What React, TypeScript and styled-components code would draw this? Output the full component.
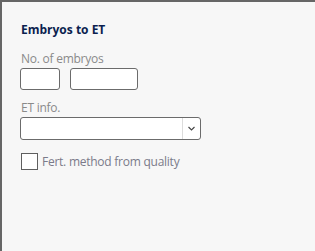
import React from 'react'
import styled, { createGlobalStyle } from 'styled-components'

const GlobalStyle = createGlobalStyle`
  html, body {
    margin: 0;
    padding: 0;
    background: #f7f7f7;
  }
  body {
    font-family: 'Open Sans', 'Noto Sans', sans-serif;
  }
`

const Panel = styled.div`
  box-sizing: border-box;
  width: 315px;
  height: 251px;
  background: #f7f7f7;
  border-top: 2px solid #666666;
  border-left: 2px solid #666666;
  padding: 20px 0 0 18px;
`

const Title = styled.h2`
  margin: 0 0 13px 1px;
  font-size: 12px;
  font-weight: 700;
  line-height: 16px;
  color: #0b1f4f;
`

const Field = styled.div`
  display: flex;
  flex-direction: column;
  margin-bottom: 10px;
`

const Label = styled.label`
  margin-left: 1px;
  font-size: 12px;
  letter-spacing: -0.25px;
  line-height: 16px;
  color: #8a8a8a;
  margin-bottom: 1px;
`

const Row = styled.div`
  display: flex;
  gap: 10px;
`

const TextBox = styled.input<{ $width: number }>`
  box-sizing: border-box;
  width: ${(p) => p.$width}px;
  height: 22px;
  border: 1px solid #6b6b6b;
  border-radius: 3px;
  background: #ffffff;
  padding: 0 4px;
  font: inherit;
  outline: none;
`

const SelectBox = styled.div`
  box-sizing: border-box;
  display: flex;
  width: 181px;
  height: 23px;
  border: 1px solid #6b6b6b;
  border-radius: 3px;
  background: #ffffff;
`

const SelectValue = styled.div`
  flex: 1;
`

const SelectArrow = styled.div`
  width: 17px;
  border-left: 1px solid #dcdcdc;
  display: flex;
  align-items: center;
  justify-content: center;
`

const CheckRow = styled.label`
  display: flex;
  align-items: center;
  gap: 4px;
  margin-top: 13px;
  margin-left: 1px;
  font-size: 12px;
  letter-spacing: -0.25px;
  color: #7b7b8a;
`

const CheckBox = styled.span`
  box-sizing: border-box;
  width: 17px;
  height: 17px;
  border: 1px solid #5f5f5f;
  background: #ffffff;
`

export default function App() {
  return (
    <>
      <GlobalStyle />
      <Panel>
        <Title>Embryos to ET</Title>
        <Field>
          <Label>No. of embryos</Label>
          <Row>
            <TextBox $width={40} />
            <TextBox $width={68} />
          </Row>
        </Field>
        <Field>
          <Label>ET info.</Label>
          <SelectBox>
            <SelectValue />
            <SelectArrow>
              <svg width="7" height="5" viewBox="0 0 7 5">
                <path d="M0.5 1 L3.5 4 L6.5 1" fill="none" stroke="#444" strokeWidth="1.1" />
              </svg>
            </SelectArrow>
          </SelectBox>
        </Field>
        <CheckRow>
          <CheckBox />
          Fert. method from quality
        </CheckRow>
      </Panel>
    </>
  )
}
